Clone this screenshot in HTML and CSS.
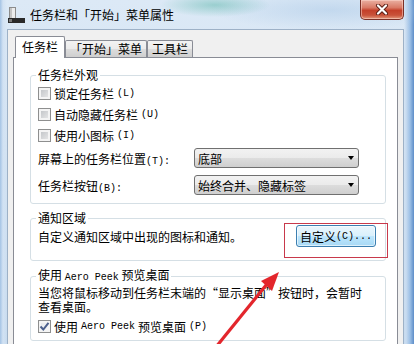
FILE: index.html
```html
<!DOCTYPE html>
<html lang="zh-CN">
<head>
    <meta charset="UTF-8">
    <title>任务栏和「开始」菜单属性</title>
    <link rel="stylesheet" href="styles.css">
</head>
<body>
    <div class="window">
        <div class="titlebar">
            <svg class="app-icon" width="17" height="16" viewBox="0 0 17 16">
                <rect x="1.5" y="0.5" width="6" height="12" fill="#ececec" stroke="#8c8c8c"/>
                <rect x="2" y="1" width="2" height="11" fill="#c4c4c4"/>
                <rect x="0" y="11" width="17" height="5" fill="#2a2a2a"/>
                <rect x="1" y="12" width="3" height="3" fill="#7a7a7a"/>
            </svg>
            <span class="title">任务栏和「开始」菜单属性</span>
            <div class="close-btn">
                <svg width="14" height="11" viewBox="0 0 14 11">
                    <path d="M3 1.5 L11 9.5 M11 1.5 L3 9.5" stroke="#5b1d14" stroke-width="4" stroke-linecap="round"/>
                    <path d="M3 1.5 L11 9.5 M11 1.5 L3 9.5" stroke="#ffffff" stroke-width="2.2" stroke-linecap="round"/>
                </svg>
            </div>
        </div>

        <div class="client">
            <div class="tabs">
                <div class="tab active">任务栏</div>
                <div class="tab">「开始」菜单</div>
                <div class="tab">工具栏</div>
            </div>
            <div class="page">
                <fieldset class="group first">
                    <legend>任务栏外观</legend>
                    <label class="check"><span class="box"></span>锁定任务栏<span class="en">(L)</span></label>
                    <label class="check"><span class="box"></span>自动隐藏任务栏<span class="en">(U)</span></label>
                    <label class="check"><span class="box"></span>使用小图标<span class="en">(I)</span></label>
                    <div class="field-row">
                        <span>屏幕上的任务栏位置<span class="en">(T):</span></span>
                        <div class="combo">底部<i class="caret"></i></div>
                    </div>
                    <div class="field-row second">
                        <span>任务栏按钮<span class="en">(B):</span></span>
                        <div class="combo">始终合并、隐藏标签<i class="caret"></i></div>
                    </div>
                </fieldset>

                <fieldset class="group notify">
                    <legend>通知区域</legend>
                    <div class="action-row">
                        <span>自定义通知区域中出现的图标和通知。</span>
                        <div class="btn">自定义<span class="en">(C)...</span></div>
                    </div>
                </fieldset>

                <fieldset class="group peek">
                    <legend>使用 <span class="en">Aero Peek</span> 预览桌面</legend>
                    <p class="desc">当您将鼠标移动到任务栏末端的<span class="q">“</span>显示桌面<span class="q">”</span>按钮时，会暂时<br>查看桌面。</p>
                    <label class="check"><span class="box checked">
                        <svg width="11" height="11" viewBox="0 0 11 11"><path d="M1.5 5.5 L4.3 8.5 L9.5 1.8" fill="none" stroke="#4b5f8c" stroke-width="2"/></svg>
                    </span>使用 <span class="en">Aero Peek</span> 预览桌面<span class="en">(P)</span></label>
                </fieldset>
            </div>
        </div>

        <!-- annotation over the screenshot -->
        <div class="highlight"></div>
        <svg class="pointer" width="414" height="344" viewBox="0 0 414 344">
            <path d="M216 347 L267 284" stroke="#e3262c" stroke-width="3.2" fill="none"/>
            <path d="M279 272 L261 281 L272 291 Z" fill="#e3262c"/>
        </svg>
    </div>
</body>
</html>
```

FILE: styles.css
```css
* {
    box-sizing: border-box;
}
body {
    margin: 0;
    font-family: "Noto Sans CJK SC", "Noto Sans", sans-serif;
    font-size: 12px;
    color: #000;
}
.window {
    position: relative;
    width: 414px;
    height: 344px;
    overflow: hidden;
    background:
        linear-gradient(90deg, #a4c3e4 0, #d2e2f3 3px, rgba(220, 233, 246, 0) 7px),
        linear-gradient(270deg, #5d8dc8 0, #9dc0e6 4px, #c9dcf0 8px, rgba(200, 220, 240, 0) 10px),
        linear-gradient(#dce9f6, #c7dbef);
}
.titlebar {
    height: 29px;
    display: flex;
    align-items: flex-start;
    background:
        radial-gradient(ellipse 55px 12px at 215px 5px, rgba(100, 185, 175, 0.55), rgba(100, 185, 175, 0)),
        radial-gradient(ellipse 120px 20px at 330px 10px, rgba(170, 200, 230, 0.5), rgba(170, 200, 230, 0));
}
.app-icon {
    margin: 7px 0 0 8px;
}
.title {
    margin: 7px 0 0 5px;
    line-height: 16px;
}
.close-btn {
    margin-left: auto;
    margin-right: 10px;
    width: 44px;
    height: 20px;
    border: 1px solid #7b3027;
    border-top: none;
    border-radius: 0 0 5px 5px;
    background: linear-gradient(#eab0a2, #d97a66 40%, #c4402a 55%, #c9523a 80%, #e39a7d);
    box-shadow: inset 0 0 0 1px rgba(255, 220, 210, 0.5);
    display: flex;
    align-items: center;
    justify-content: center;
}
.client {
    margin-left: 7px;
    width: 397px;
    height: 320px;
    border: 1px solid #9db1c7;
    border-bottom: none;
    background: #f0f0f0;
    padding-top: 6px;
}
.tabs {
    display: flex;
    align-items: flex-end;
    height: 22px;
    padding-left: 7px;
    margin-bottom: -1px;
    position: relative;
    z-index: 1;
}
.tab {
    height: 17px;
    margin-bottom: 1px;
    padding: 0 4px;
    line-height: 16px;
    border: 1px solid #898c95;
    border-bottom: none;
    border-radius: 2px 2px 0 0;
    background: linear-gradient(#f3f3f3, #ebebeb 50%, #dddddd 50%, #cfcfcf);
}
.tab.active {
    height: 22px;
    margin-bottom: 0;
    padding: 0 6px;
    line-height: 20px;
    background: #fff;
}
.page {
    margin-left: 5px;
    width: 385px;
    height: 300px;
    border: 1px solid #898c95;
    background: #fff;
    padding: 0 11px 0 16px;
}
.group {
    margin: 7px 0 0;
    padding: 0 9px 8px 7px;
    border: 1px solid #d5dfe5;
    border-radius: 3px;
    min-width: 0;
}
.group legend {
    padding: 0 2px;
    margin-left: -2px;
    line-height: 14px;
}
.group.first {
    margin-top: 10px;
    padding-top: 1px;
}
.group.notify {
    padding-bottom: 13px;
}
.group.peek {
    margin-top: 7px;
    padding-top: 1px;
    padding-bottom: 3px;
}
.en {
    font-family: "Liberation Mono", monospace;
    font-size: 10px;
}
.check {
    display: flex;
    align-items: center;
    gap: 3px;
    height: 21px;
}
.box {
    width: 13px;
    height: 13px;
    border: 1px solid #8e8f8f;
    background: linear-gradient(135deg, #bcbfc3, #ececec);
    box-shadow: inset 0 0 0 2px #f4f4f4;
    display: flex;
    align-items: center;
    justify-content: center;
}
.box.checked {
    background: linear-gradient(135deg, #e3e6ea, #fafafa);
}
.field-row {
    display: grid;
    grid-template-columns: 156px 165px;
    align-items: center;
    height: 20px;
    margin-top: 2px;
}
.field-row.second {
    margin-top: 7px;
}
.combo {
    height: 20px;
    border: 1px solid #707070;
    border-radius: 3px;
    background: linear-gradient(#f2f2f2, #ebebeb 50%, #dddddd 50%, #cfcfcf);
    display: flex;
    align-items: center;
    justify-content: space-between;
    padding: 0 4px 0 3px;
}
.caret {
    width: 0;
    height: 0;
    border-left: 3.5px solid transparent;
    border-right: 3.5px solid transparent;
    border-top: 4px solid #000;
}
.action-row {
    display: flex;
    align-items: center;
    justify-content: space-between;
    height: 22px;
}
.btn {
    width: 80px;
    height: 22px;
    border: 1px solid #3c7fb1;
    border-radius: 3px;
    background: linear-gradient(#eaf6fd, #d9f0fc 50%, #bee6fd 50%, #a7d9f5);
    box-shadow: inset 0 0 0 1px rgba(255, 255, 255, 0.6);
    display: flex;
    align-items: center;
    justify-content: center;
}
.desc {
    margin: 0;
    font-family: "Liberation Sans", "Noto Sans CJK SC", sans-serif;
    line-height: 14px;
}
.desc .q {
    font-family: "Noto Sans CJK SC", sans-serif;
}
.group.peek .check {
    margin-top: 1px;
}
.highlight {
    position: absolute;
    left: 284px;
    top: 223px;
    width: 104px;
    height: 35px;
    border: 1px solid #c8394b;
}
.pointer {
    position: absolute;
    left: 0;
    top: 0;
    pointer-events: none;
}
```
